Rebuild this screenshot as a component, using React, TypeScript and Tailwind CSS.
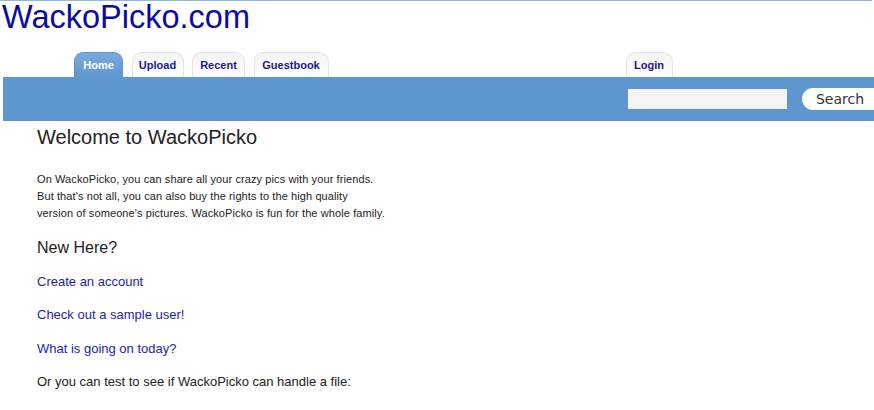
const tabs = [
  { label: "Home", w: "w-[49px]" },
  { label: "Upload", w: "w-[52px]" },
  { label: "Recent", w: "w-[53px]" },
  { label: "Guestbook", w: "w-[75px]" },
];

function Tab({ label, w, active }: { label: string; w: string; active?: boolean }) {
  return (
    <div
      className={`${w} h-[25px] flex items-center justify-center rounded-t-[9px] border border-b-0 text-[11px] font-bold ${
        active
          ? "bg-gradient-to-b from-[#7aaade] to-[#5e96d0] border-[#5e96d0] text-white"
          : "bg-gradient-to-b from-[#f4f4f4] to-white border-[#e4e4e4] text-[#1a1a8c]"
      }`}
    >
      {label}
    </div>
  );
}

export default function App() {
  return (
    <div className="w-[874px] h-[410px] bg-white overflow-hidden font-['Liberation_Sans',Arial,sans-serif]">
      <div className="h-px w-[872px] bg-[#8fb8e4]" />
      <h1 className="text-[32.5px] leading-[34px] text-[#0c0c9c] pl-[2px] -mt-[1px]">WackoPicko.com</h1>

      <div className="flex items-end h-[43px] ml-[74px]">
        <div className="flex gap-[8.5px]">
          {tabs.map((t, i) => (
            <Tab key={t.label} label={t.label} w={t.w} active={i === 0} />
          ))}
        </div>
        <div className="ml-[297px]">
          <Tab label="Login" w="w-[47px]" />
        </div>
      </div>

      <div className="ml-[3px] w-[871px] h-[44px] bg-[#5e96d0] flex items-center justify-end">
        <div className="w-[159px] h-[20px] bg-[#f5f5f5] mr-[15px]" />
        <button className="w-[72px] h-[22px] bg-white rounded-l-full text-[14px] text-[#333] leading-none font-['DejaVu_Sans',sans-serif] pl-1">
          Search
        </button>
      </div>

      <div className="pl-[37px] text-[#222]">
        <h2 className="text-[20px] leading-[24px] mt-[4px]">Welcome to WackoPicko</h2>
        <p className="text-[11px] leading-[17px] mt-[22px] tracking-[0.1px]">
          On WackoPicko, you can share all your crazy pics with your friends.
          <br />
          But that's not all, you can also buy the rights to the high quality
          <br />
          version of someone's pictures. WackoPicko is fun for the whole family.
        </p>
        <h3 className="text-[16px] leading-[20px] mt-[16px]">New Here?</h3>
        <div className="flex flex-col text-[13px] leading-[17px] mt-[15px] gap-[16.3px] text-[#1e1ea8]">
          <a href="#">Create an account</a>
          <a href="#">Check out a sample user!</a>
          <a href="#">What is going on today?</a>
          <p className="text-[#222]">Or you can test to see if WackoPicko can handle a file:</p>
        </div>
      </div>
    </div>
  );
}
